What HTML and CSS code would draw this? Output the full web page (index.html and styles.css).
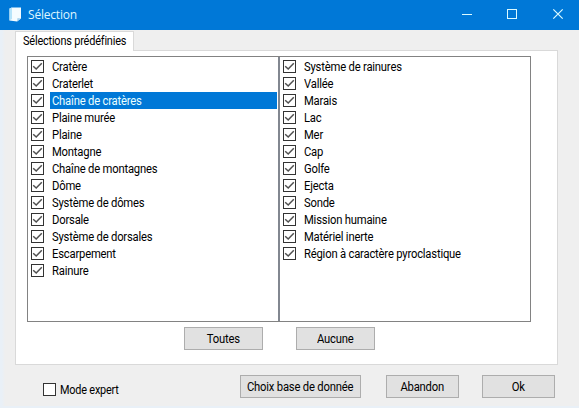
FILE: index.html
```html
<!DOCTYPE html>
<html lang="fr">
<head>
<meta charset="utf-8">
<title>Sélection</title>
<link rel="stylesheet" href="styles.css">
</head>
<body>
<svg class="defs" width="0" height="0"><symbol id="check" viewBox="0 0 11 11"><path d="M1.2 5.2 4.2 8 9.8 2.2" fill="none" stroke="#505050" stroke-width="1.5"/></symbol></svg>
<div class="window">
  <header class="titlebar">
    <svg class="app-icon" width="13" height="15" viewBox="0 0 13 15"><path d="M.5 1.5 3 .5H12V11.5L8 14.5.5 13.5Z" fill="#f4fcff"/><path d="M.5 1.5 3 .5V12L.5 13.5Z" fill="#b5e4fa"/><path d="M8 14.5 8.5 11 12 11.5Z" fill="#a9d4ef"/></svg>
    <h1 class="title">Sélection</h1>
    <svg class="controls" width="107" height="30" viewBox="0 0 107 30" fill="none" stroke="#dcfaff"><path d="M0 14.5H10"/><rect x="45.5" y="9.5" width="9" height="9"/><path d="M91.3 9.3 100.7 18.7M100.7 9.3 91.3 18.7" stroke-width="1.2"/></svg>
  </header>
  <main class="client">
    <div class="tab"><span class="text">Sélections prédéfinies</span></div>
    <section class="panel">
      <div class="lists">
        <ul class="list">
          <li><svg class="box"><use href="#check"/></svg><span class="cell"><span class="text">Cratère</span></span></li>
          <li><svg class="box"><use href="#check"/></svg><span class="cell"><span class="text">Craterlet</span></span></li>
          <li class="selected"><svg class="box"><use href="#check"/></svg><span class="cell"><span class="text">Chaîne de cratères</span></span></li>
          <li><svg class="box"><use href="#check"/></svg><span class="cell"><span class="text">Plaine murée</span></span></li>
          <li><svg class="box"><use href="#check"/></svg><span class="cell"><span class="text">Plaine</span></span></li>
          <li><svg class="box"><use href="#check"/></svg><span class="cell"><span class="text">Montagne</span></span></li>
          <li><svg class="box"><use href="#check"/></svg><span class="cell"><span class="text">Chaîne de montagnes</span></span></li>
          <li><svg class="box"><use href="#check"/></svg><span class="cell"><span class="text">Dôme</span></span></li>
          <li><svg class="box"><use href="#check"/></svg><span class="cell"><span class="text">Système de dômes</span></span></li>
          <li><svg class="box"><use href="#check"/></svg><span class="cell"><span class="text">Dorsale</span></span></li>
          <li><svg class="box"><use href="#check"/></svg><span class="cell"><span class="text">Système de dorsales</span></span></li>
          <li><svg class="box"><use href="#check"/></svg><span class="cell"><span class="text">Escarpement</span></span></li>
          <li><svg class="box"><use href="#check"/></svg><span class="cell"><span class="text">Rainure</span></span></li>
        </ul>
        <ul class="list">
          <li><svg class="box"><use href="#check"/></svg><span class="cell"><span class="text">Système de rainures</span></span></li>
          <li><svg class="box"><use href="#check"/></svg><span class="cell"><span class="text">Vallée</span></span></li>
          <li><svg class="box"><use href="#check"/></svg><span class="cell"><span class="text">Marais</span></span></li>
          <li><svg class="box"><use href="#check"/></svg><span class="cell"><span class="text">Lac</span></span></li>
          <li><svg class="box"><use href="#check"/></svg><span class="cell"><span class="text">Mer</span></span></li>
          <li><svg class="box"><use href="#check"/></svg><span class="cell"><span class="text">Cap</span></span></li>
          <li><svg class="box"><use href="#check"/></svg><span class="cell"><span class="text">Golfe</span></span></li>
          <li><svg class="box"><use href="#check"/></svg><span class="cell"><span class="text">Ejecta</span></span></li>
          <li><svg class="box"><use href="#check"/></svg><span class="cell"><span class="text">Sonde</span></span></li>
          <li><svg class="box"><use href="#check"/></svg><span class="cell"><span class="text">Mission humaine</span></span></li>
          <li><svg class="box"><use href="#check"/></svg><span class="cell"><span class="text">Matériel inerte</span></span></li>
          <li><svg class="box"><use href="#check"/></svg><span class="cell"><span class="text">Région à caractère pyroclastique</span></span></li>
        </ul>
      </div>
      <div class="list-actions">
        <button class="button"><span class="text">Toutes</span></button>
        <button class="button"><span class="text">Aucune</span></button>
      </div>
    </section>
    <footer class="footer">
      <label class="expert"><svg class="box"></svg><span class="text">Mode expert</span></label>
      <button class="button database"><span class="text">Choix base de donnée</span></button>
      <button class="button cancel"><span class="text">Abandon</span></button>
      <button class="button ok"><span class="text">Ok</span></button>
    </footer>
  </main>
</div>
</body>
</html>
```
FILE: styles.css
```css
* { box-sizing: border-box; }
body { margin: 0; overflow: hidden; font: 12.5px/17px Roboto, "Liberation Sans", sans-serif; letter-spacing: -0.22px; color: #000; }
.defs { display: block; height: 0; }
.window { width: 579px; height: 408px; background: #efefef; border-bottom: 2px solid #e9f0f7; }
.titlebar { height: 30px; background: #0078d7; display: flex; align-items: center; padding-left: 9px; }
.app-icon { margin-top: -2px; }
.title { margin: 0 0 0 6px; font: 12px/30px "Open Sans", sans-serif; letter-spacing: -0.2px; color: #dff6ff; }
.controls { margin-left: auto; margin-right: 10px; }
.client { height: 376px; padding: 1px 21px 0 15px; background: linear-gradient(90deg, #e9f0f7 0 2px, #efefef 5px); }
.text { display: inline-block; white-space: nowrap; font-weight: 400; transform: scaleX(0.9); transform-origin: 0 50%; }
.button .text { transform-origin: 50% 50%; }
.tab { position: relative; width: 119px; height: 20px; background: #fff; border: 1px solid #d9d9d9; border-bottom: 0; padding-left: 7px; }
.tab .text { transform: scaleX(0.875); }
.panel { width: 543px; height: 315px; margin-top: -1px; background: #fff; border: 1px solid #d9d9d9; padding: 5px 0 0 11px; }
.lists { display: flex; width: 504px; height: 266px; border: 1px solid #828282; }
.list { list-style: none; margin: 0; padding: 1px 1px 0 3px; width: 250px; }
.list + .list { width: 252px; border-left: 2px solid #828790; }
.list li { display: flex; height: 17px; }
.cell { flex: 1; margin-left: 6px; padding-left: 2px; }
.list .box { margin-top: 2px; }
.box { flex: none; display: block; width: 13px; height: 13px; border: 1px solid #333; background: #fff; }
.box use { width: 11px; height: 11px; }
.selected .cell { background: #0078d7; color: #eaffff; }
.list-actions { display: flex; gap: 33px; margin: 5px 0 0 157px; }
.button { width: 79px; height: 23px; padding: 0; display: flex; justify-content: center; align-items: center; border: 1px solid #adadad; background: #e1e1e1; color: #000; font: inherit; letter-spacing: inherit; }
.footer { display: flex; margin-top: 10px; padding-left: 28px; }
.expert { display: flex; align-items: center; width: 197px; padding-top: 6px; }
.expert .text { margin-left: 3.5px; transform: scaleX(0.87); }
.database { width: 121px; }
.cancel { width: 73px; margin-left: 25px; }
.ok { width: 73px; margin-left: 23px; }
```
